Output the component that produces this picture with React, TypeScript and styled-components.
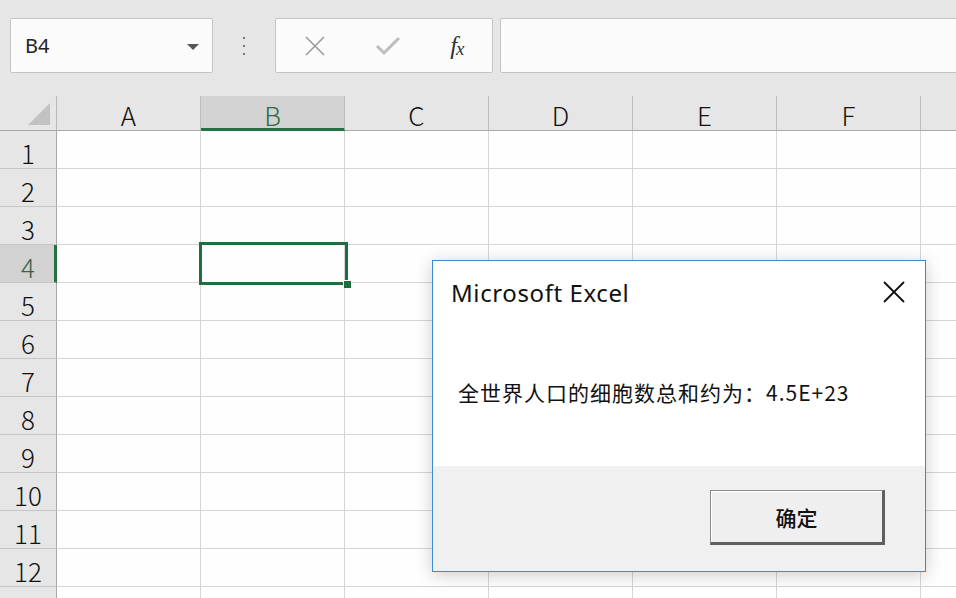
import { createGlobalStyle } from "styled-components";
import styled from "styled-components";

const GREEN = "#217346";
const COLS = ["A", "B", "C", "D", "E", "F", "G"];
const ROWS = Array.from({ length: 13 }, (_, i) => i + 1);
const SEL_COL = "B";
const SEL_ROW = 4;
// last row is only a sliver at the bottom, its number is not visible
const LAST_SHOWN = 12;

const GlobalStyle = createGlobalStyle`
    html, body {
        margin: 0;
        padding: 0;
        background: #e6e6e6;
        overflow: hidden;
    }
`;

const Page = styled.div`
    position: relative;
    width: 956px;
    height: 598px;
    overflow: hidden;
    background: #e6e6e6;
    font-family: "Noto Sans CJK SC", "Noto Sans", sans-serif;
`;

const Toolbar = styled.div`
    height: 96px;
    box-sizing: border-box;
    display: flex;
    align-items: flex-start;
    padding: 18px 0 0 10px;
`;

const Box = styled.div<{ $w?: number }>`
    height: 55px;
    box-sizing: border-box;
    background: #fbfbfb;
    border: 1px solid #c4c4c4;
    border-radius: 2px;
    display: flex;
    align-items: center;
    ${(p) => (p.$w ? `width: ${p.$w}px; flex: none;` : "flex: 1;")}
`;

const NameBox = styled(Box)`
    padding: 0 13px 0 14px;
    justify-content: space-between;
    font-family: "Noto Sans", sans-serif;
    font-size: 20px;
    color: #222;
`;

const Caret = styled.span`
    width: 0;
    height: 0;
    border-left: 6px solid transparent;
    border-right: 6px solid transparent;
    border-top: 6px solid #555;
    margin-top: 2px;
`;

const Grip = styled.div`
    width: 62px;
    height: 55px;
    flex: none;
    display: flex;
    flex-direction: column;
    align-items: center;
    justify-content: center;
    gap: 6px;
    span {
        width: 2px;
        height: 2px;
        background: #777;
    }
`;

const FxButtons = styled(Box)`
    justify-content: space-around;
    padding: 0 4px;
`;

const FxText = styled.span`
    font-family: "Liberation Serif", serif;
    font-style: italic;
    font-size: 25px;
    color: #333;
    letter-spacing: -1px;
    sub {
        font-size: 19px;
        vertical-align: -1px;
    }
`;

const FormulaInput = styled(Box)`
    margin-left: 7px;
    margin-right: -6px;
`;

const Sheet = styled.div`
    display: grid;
    grid-template-columns: 57px repeat(7, 144px);
    grid-template-rows: 35px repeat(13, 38px);
`;

const Corner = styled.div`
    background: #e6e6e6;
    border-right: 1px solid #b9b9b9;
    border-bottom: 1px solid #a9a9a9;
    box-sizing: border-box;
    display: flex;
    align-items: flex-end;
    justify-content: flex-end;
    padding: 0 6px 5px 0;
`;

const ColHead = styled.div<{ $active?: boolean }>`
    box-sizing: border-box;
    background: ${(p) => (p.$active ? "#d2d2d2" : "#e6e6e6")};
    border-right: 1px solid #bdbdbd;
    border-bottom: ${(p) => (p.$active ? `3px solid ${GREEN}` : "1px solid #a9a9a9")};
    display: flex;
    align-items: center;
    justify-content: center;
    padding-top: ${(p) => (p.$active ? "4px" : "2px")};
    font-size: 26px;
    font-weight: 300;
    color: ${(p) => (p.$active ? "#2b6b45" : "#111")};
`;

const RowHead = styled.div<{ $active?: boolean }>`
    box-sizing: border-box;
    background: ${(p) => (p.$active ? "#d2d2d2" : "#e6e6e6")};
    border-right: ${(p) => (p.$active ? `3px solid ${GREEN}` : "1px solid #a9a9a9")};
    border-bottom: 1px solid #c6c6c6;
    display: flex;
    align-items: center;
    justify-content: center;
    padding: ${(p) => (p.$active ? "6px 0 0 2px" : "6px 0 0 0")};
    font-size: 26px;
    font-weight: 300;
    color: ${(p) => (p.$active ? "#3d5f4a" : "#111")};
`;

const Cell = styled.div`
    box-sizing: border-box;
    background: #fefefe;
    border-right: 1px solid #d6d6d6;
    border-bottom: 1px solid #d6d6d6;
`;

const Selection = styled.div`
    position: absolute;
    left: 199px;
    top: 242px;
    width: 149px;
    height: 43px;
    box-sizing: border-box;
    border: 3px solid #1f6d40;
    pointer-events: none;
    &::after {
        content: "";
        position: absolute;
        right: -6px;
        bottom: -6px;
        width: 7px;
        height: 7px;
        background: #1f6d40;
        border: 1px solid #fff;
        border-right: none;
        border-bottom: none;
    }
`;

const Dialog = styled.div`
    position: absolute;
    left: 432px;
    top: 260px;
    width: 494px;
    height: 312px;
    box-sizing: border-box;
    border: 1px solid #3a8bd3;
    background: #f0f0f0;
    box-shadow: 0 3px 16px rgba(0, 0, 0, 0.2);
    display: flex;
    flex-direction: column;
`;

const DialogBody = styled.div`
    height: 205px;
    flex: none;
    background: #fff;
    display: flex;
    flex-direction: column;
`;

const TitleBar = styled.div`
    height: 62px;
    display: flex;
    align-items: center;
    justify-content: space-between;
    padding: 0 19px 0 18px;
`;

const Title = styled.div`
    font-family: "Noto Sans", sans-serif;
    font-size: 24px;
    color: #111;
    letter-spacing: 0.6px;
`;

const Message = styled.div`
    margin-top: 54px;
    padding-left: 25px;
    font-family: "Noto Sans CJK SC", sans-serif;
    font-size: 21px;
    color: #111;
    letter-spacing: 1px;
`;

const Footer = styled.div`
    flex: 1;
    display: flex;
    justify-content: flex-end;
    align-items: flex-start;
    padding: 24px 40px 0 0;
`;

const OkButton = styled.button`
    width: 175px;
    height: 55px;
    box-sizing: border-box;
    background: #efefef;
    border-style: solid;
    border-color: #8a8a8a #5e5e5e #5e5e5e #8a8a8a;
    border-width: 1px 3px 3px 1px;
    box-shadow: inset 1px 1px 0 #fff;
    font-family: "Noto Sans CJK SC", sans-serif;
    font-size: 21px;
    font-weight: 500;
    color: #111;
    padding: 0;
`;

function CloseIcon() {
    return (
        <svg width="24" height="24" viewBox="0 0 24 24">
            <path d="M2 2 L22 22 M22 2 L2 22" stroke="#111" strokeWidth="1.8" fill="none" />
        </svg>
    );
}

export default function App() {
    return (
        <Page>
            <GlobalStyle />
            <Toolbar>
                <NameBox $w={203}>
                    <span>B4</span>
                    <Caret />
                </NameBox>
                <Grip>
                    <span />
                    <span />
                    <span />
                </Grip>
                <FxButtons $w={218}>
                    <svg width="22" height="22" viewBox="0 0 22 22">
                        <path d="M2 2 L20 20 M20 2 L2 20" stroke="#9c9c9c" strokeWidth="1.6" fill="none" />
                    </svg>
                    <svg width="26" height="22" viewBox="0 0 26 22">
                        <path d="M2 11 L9 18 L24 3" stroke="#bdbdbd" strokeWidth="3" fill="none" />
                    </svg>
                    <FxText>
                        f<sub>x</sub>
                    </FxText>
                </FxButtons>
                <FormulaInput />
            </Toolbar>

            <Sheet>
                <Corner>
                    <svg width="22" height="22" viewBox="0 0 22 22">
                        <path d="M22 0 L22 22 L0 22 Z" fill="#c2c2c2" />
                    </svg>
                </Corner>
                {COLS.map((c) => (
                    <ColHead key={c} $active={c === SEL_COL}>
                        {c === "G" ? "" : c}
                    </ColHead>
                ))}
                {ROWS.map((r) => [
                    <RowHead key={"h" + r} $active={r === SEL_ROW}>
                        {r <= LAST_SHOWN ? r : ""}
                    </RowHead>,
                    ...COLS.map((c) => <Cell key={c + r} />),
                ])}
            </Sheet>

            <Selection />

            <Dialog>
                <DialogBody>
                    <TitleBar>
                        <Title>Microsoft Excel</Title>
                        <CloseIcon />
                    </TitleBar>
                    <Message>全世界人口的细胞数总和约为：4.5E+23</Message>
                </DialogBody>
                <Footer>
                    <OkButton>确定</OkButton>
                </Footer>
            </Dialog>
        </Page>
    );
}
